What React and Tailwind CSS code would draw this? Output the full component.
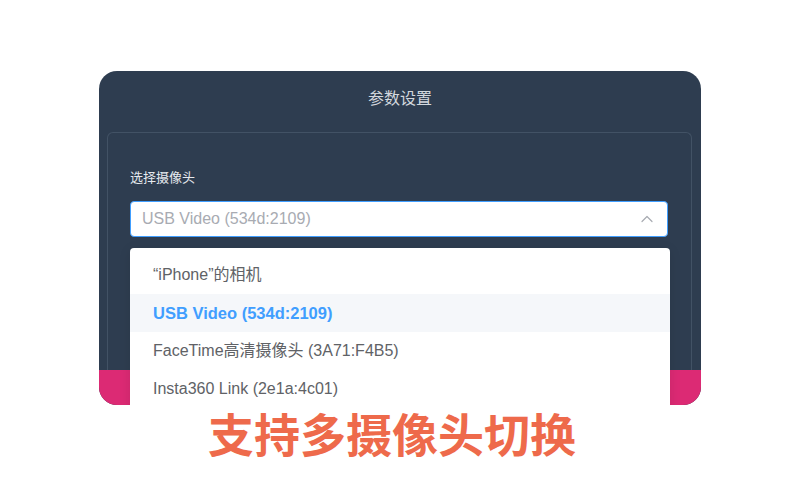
const options = [
  { label: "“iPhone”的相机" },
  { label: "USB Video (534d:2109)", selected: true },
  { label: "FaceTime高清摄像头 (3A71:F4B5)" },
  { label: "Insta360 Link (2e1a:4c01)" },
];

function ChevronUp() {
  return (
    <svg width="14" height="14" viewBox="0 0 14 14" fill="none">
      <path d="M2 9.5 L7 4.5 L12 9.5" stroke="#a8abb2" strokeWidth="1.2" strokeLinecap="round" strokeLinejoin="round" />
    </svg>
  );
}

export default function App() {
  return (
    <div
      className="w-[800px] h-[500px] bg-white pt-[71px] overflow-hidden"
      style={{ fontFamily: '"Liberation Sans", "Noto Sans CJK SC", sans-serif' }}
    >
      <div className="relative mx-auto w-[602px] h-[334px] rounded-[18px] overflow-hidden bg-[#2e3d50] flex flex-col">
        <div className="h-[61px] pb-[6px] flex items-center justify-center text-[16px] text-[#d3d8de]">
          参数设置
        </div>
        <div className="flex-1 mx-[8px] mr-[9px] rounded-t-[6px] border border-b-0 border-[#425265] px-[22px] pt-[36px]">
          <div className="text-[13px] leading-[18px] text-[#e5e9ee]">选择摄像头</div>
          <div className="mt-[14px] h-[36px] w-[538px] bg-white rounded-[4px] border border-[#409eff] flex items-center justify-between pl-[11px] pr-[13px]">
            <span className="text-[16px] text-[#a8abb2]">USB Video (534d:2109)</span>
            <ChevronUp />
          </div>
        </div>
        <div className="h-[35px] bg-[#dc2a74]"></div>

        <div className="absolute left-[31px] top-[177px] w-[540px] h-[170px] bg-white rounded-[4px] shadow-[0_2px_12px_rgba(0,0,0,0.1)] pt-[8px]">
          {options.map((o) => (
            <div
              key={o.label}
              className={
                o.selected
                  ? "h-[38px] flex items-center px-[23px] bg-[#f5f7fa] text-[16.5px] font-bold text-[#409eff]"
                  : "h-[38px] flex items-center px-[23px] text-[16px] text-[#606266]"
              }
            >
              {o.label}
            </div>
          ))}
        </div>
      </div>
      <div
        className="mt-[-1px] pr-[16px] text-center text-[46px] leading-[56px] font-bold text-[#ee6a4b]"
        style={{ fontFamily: '"Noto Sans CJK SC", sans-serif' }}
      >
        支持多摄像头切换
      </div>
    </div>
  );
}
